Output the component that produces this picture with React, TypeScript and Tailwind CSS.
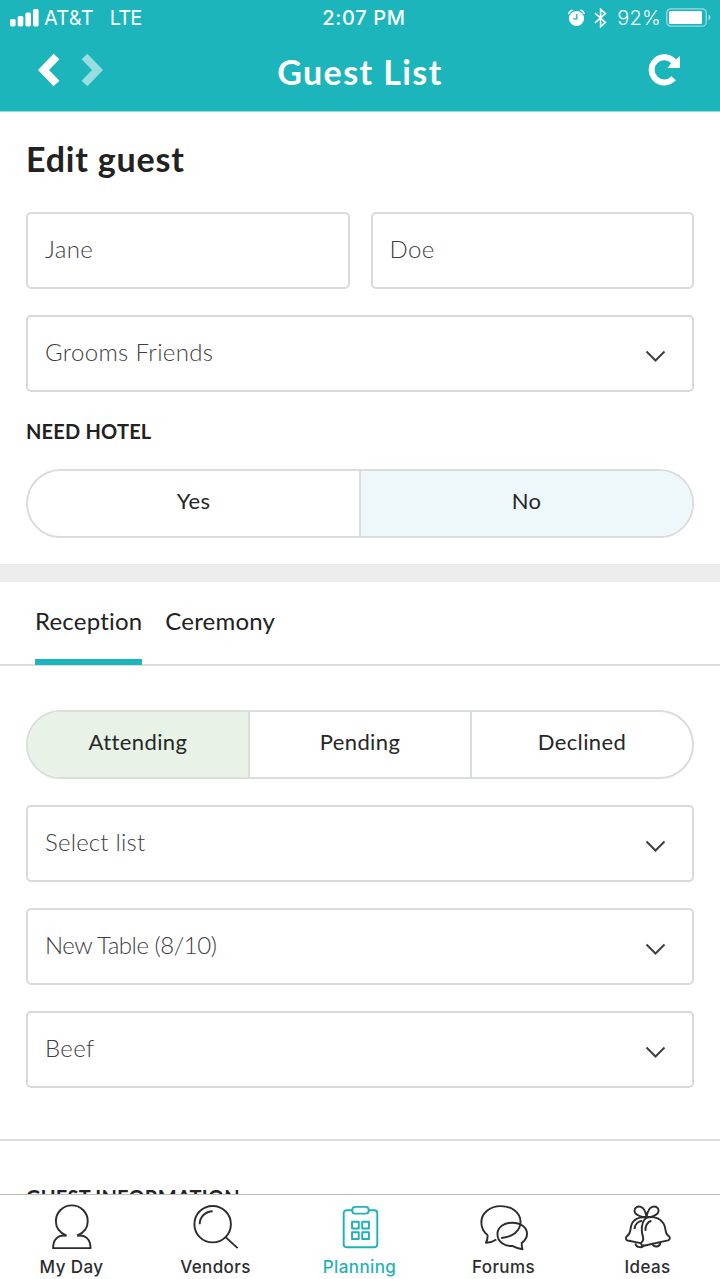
import type { ReactNode } from "react";

type Option = { label: string; className?: string };

const SignalBars = () => (
  <svg width="29" height="18" viewBox="0 0 29 18" fill="white">
    <rect x="0" y="10" width="5.6" height="7.4" rx="1.6" />
    <rect x="7.7" y="7" width="5.6" height="10.4" rx="1.6" />
    <rect x="15.4" y="3.6" width="5.6" height="13.8" rx="1.6" />
    <rect x="23" y="0" width="5.6" height="17.4" rx="1.6" />
  </svg>
);

const AlarmIcon = () => (
  <svg width="17" height="18" viewBox="0 0 17 18" fill="none">
    <circle cx="8.5" cy="9.5" r="7.6" fill="white" />
    <path d="M8.8 5v4.8H5.2" stroke="#1cb5bc" strokeWidth="1.3" />
    <path
      d="M.8 4.4Q1.6 2 4 1.2M16.2 4.4Q15.4 2 13 1.2"
      stroke="white"
      strokeWidth="1.6"
      strokeLinecap="round"
    />
  </svg>
);

const BluetoothIcon = () => (
  <svg width="13" height="20" viewBox="0 0 13 20" fill="none">
    <path
      d="M1 5.2l10.4 9.2L6.6 18.6V1.4l4.8 4.2L1 14.8"
      stroke="white"
      strokeWidth="1.6"
    />
  </svg>
);

const BatteryIcon = () => (
  <svg width="46" height="20" viewBox="0 0 46 20" fill="none">
    <rect
      x=".8"
      y=".8"
      width="39.4"
      height="17.4"
      rx="4"
      stroke="white"
      strokeOpacity=".55"
      strokeWidth="1.3"
    />
    <rect x="3" y="3" width="33" height="13" rx="1.6" fill="white" />
    <path d="M42.5 6.5q2 1 2 3t-2 3z" fill="white" fillOpacity=".55" />
  </svg>
);

const StatusBar = () => {
  return (
    <div className="flex h-9 items-center pr-2 pl-[10px] text-[20px] text-white">
      <div className="flex w-[299px] items-center">
        <SignalBars />
        <span className="ml-[5px] tracking-[0.2px]">AT&amp;T</span>
        <span className="ml-[16px] tracking-[-0.9px]">LTE</span>
      </div>
      <p className="w-[110px] text-center font-medium tracking-[0.7px]">
        2:07 PM
      </p>
      <div className="ml-auto flex items-center">
        <AlarmIcon />
        <span className="ml-[9px]">
          <BluetoothIcon />
        </span>
        <span className="ml-[10px] font-light tracking-[0.2px]">92%</span>
        <span className="ml-[5px]">
          <BatteryIcon />
        </span>
      </div>
    </div>
  );
};

const Header = () => {
  return (
    <header className="h-28 shrink-0 border-b border-[#8fdadd] bg-[#1cb5bc] font-['Inter',sans-serif]">
      <StatusBar />
      <div className="grid h-[68px] grid-cols-3 items-center px-[38px]">
        <div className="flex gap-[21px]">
          <svg width="22" height="34" viewBox="0 0 22 34" fill="none">
            <path d="M18.5 3.5L5.5 17l13 13.5" stroke="white" strokeWidth="8" />
          </svg>
          <svg width="22" height="34" viewBox="0 0 22 34" fill="none">
            <path
              d="M3.5 3.5l13 13.5-13 13.5"
              stroke="white"
              strokeOpacity=".55"
              strokeWidth="8"
            />
          </svg>
        </div>
        <h1 className="pt-[3px] text-center font-['Lato',sans-serif] text-[34px] font-bold tracking-[1.4px] whitespace-nowrap text-white">
          Guest List
        </h1>
        <svg
          className="justify-self-end"
          width="34"
          height="34"
          viewBox="0 0 34 34"
          fill="none"
        >
          <path
            d="M25.6 25.3A12.6 12.6 0 1 1 26.4 9.4"
            stroke="white"
            strokeWidth="6"
          />
          <path d="M32 3v12H19.5l3-4 4-3z" fill="white" />
        </svg>
      </div>
    </header>
  );
};

const Field = ({ children }: { children: ReactNode }) => {
  return (
    <div className="flex h-[77px] flex-1 items-center rounded-[5px] border-2 border-[#d9dada] px-[17px] pb-[3px] text-[24px] font-light tracking-[0.35px] text-[#404040]">
      {children}
    </div>
  );
};

const Select = ({ value, className }: { value: string; className?: string }) => {
  return (
    <div className="flex">
      <Field>
        <span className={className}>{value}</span>
        <svg
          className="mt-[8px] mr-[8px] ml-auto"
          width="22"
          height="14"
          viewBox="0 0 22 14"
          fill="none"
        >
          <path d="M1.5 2.5l9 9 9-9" stroke="#3f4040" strokeWidth="2" />
        </svg>
      </Field>
    </div>
  );
};

const Segmented = ({ options }: { options: Option[] }) => {
  return (
    <div className="flex h-[69px] divide-x-2 divide-[#d9dddc] overflow-hidden rounded-full border-2 border-[#d9dddc] text-[22px] tracking-[0.4px] text-[#262727]">
      {options.map(({ label, className }) => (
        <div
          key={label}
          className={`flex flex-1 basis-0 items-center justify-center pb-[7px] ${className ?? ""}`}
        >
          {label}
        </div>
      ))}
    </div>
  );
};

const PersonIcon = () => (
  <>
    <path d="M19.2 33C12 30 8.2 24.4 8.2 18a16.6 16.6 0 0 1 33.2 0c0 6.4-3.8 12-11 15" />
    <path d="M19.2 33C10.5 31.5 5.3 37 5.3 46h39c0-9-5.2-14.5-13.900-13" />
  </>
);

const SearchIcon = () => (
  <>
    <circle cx="21.500" cy="21" r="19" />
    <path d="M8 21A13.5 13.5 0 0 1 21.5 7.5M35 34.5L47.5 46" />
  </>
);

const ClipboardIcon = () => (
  <>
    <path d="M17 6.5H11a3 3 0 0 0-3 3V42a3 3 0 0 0 3 3h29a3 3 0 0 0 3-3V9.5a3 3 0 0 0-3-3h-6" />
    <rect x="17" y="3" width="17" height="7" rx="3" />
    <path d="M16.7 18.5h7v7h-7zM27.3 18.5h7v7h-7zM16.7 29.5h7v7h-7zM27.3 29.5h7v7h-7z" />
  </>
);

const ChatIcon = () => (
  <>
    <path d="M8 32.5c0 3-.5 5.500-1.800 7.800 4 .1 7.500-1.200 10.800-3.400M8 32.500C4 29.500 1.400 24.500 1.400 19c0-9.800 9-16.800 20.300-16.800S42.200 9 42.200 18.500c0 9.500-8 16-20.200 17" />
    <path d="M43.500 40.500C47 38 49 34.500 49 31c0-7-7-11.500-15.500-11.500S18.200 24 18.200 31.500 25 44 33.500 43.700c3.500 1.800 7 3 10.700 3.500-.6-2.200-.8-4.200-.7-6.700z" />
  </>
);

const BellsIcon = () => (
  <>
    <path d="M23.500 13.500C20 14 11 12 11 7c0-3.500 3.500-5 6.500-4 3.500 1.100 5.300 6 6 10.500.7-4.500 2.500-9.400 6-10.500 3-1 6.500.5 6.500 4 0 5-9 7-12.500 6.500z" />
    <path d="M23.500 14.300c8-2.500 16.500 1.500 18.800 8.700 1.700 5.400.7 8.300 4 10.200 2.300 1.100 1.600 4.100-.4 4.700L20.600 43.500c-2.700.5-3.700-3-1.600-4.500 2.800-2 0-5-.4-10.500-.4-6.500.9-11.700 4.900-14.200z" />
    <path d="M23.500 14.300c-8-1.500-14.500 2-16 8.500-1.500 5 0 8-4.400 10.700-1.700 1.100-1.500 4 .7 4.500l14.700 3M22.500 28c-.8-4 1.500-9.500 6-10.500M11 26c.3-4.500 3.500-8 8-8.500M12 41c.3 5 8 5 9 1.500M29.500 42c2 3.500 8 3 8.300-1.500" />
  </>
);

const TABS = [
  { label: "My Day", icon: <PersonIcon /> },
  { label: "Vendors", icon: <SearchIcon /> },
  { label: "Planning", icon: <ClipboardIcon />, active: true },
  { label: "Forums", icon: <ChatIcon /> },
  { label: "Ideas", icon: <BellsIcon /> },
];

const TabBar = () => {
  return (
    <nav className="flex h-[85px] shrink-0 border-t border-[#bfbfbf] bg-white font-['Inter',sans-serif]">
      {TABS.map(({ label, icon, active }) => (
        <div
          key={label}
          className={`flex flex-1 flex-col items-center pt-[9px] ${
            active ? "text-[#1fb2b8]" : "text-[#2d2d2d]"
          }`}
        >
          <svg
            width="50"
            height="50"
            viewBox="0 0 50 50"
            fill="none"
            stroke="currentColor"
            strokeWidth="2"
            strokeLinejoin="round"
          >
            {icon}
          </svg>
          <span className="mt-[3px] -ml-px text-[17px] leading-6 font-medium tracking-[0.4px]">
            {label}
          </span>
        </div>
      ))}
    </nav>
  );
};

export default function App() {
  return (
    <div className="flex h-[1279px] w-[720px] flex-col overflow-hidden bg-white font-['Lato',sans-serif] text-[#222]">
      <Header />
      <main className="min-h-0 flex-1 overflow-hidden">
        <section className="px-[26px] pt-[27px] pb-[26px]">
          <h2 className="text-[34px] leading-10 font-bold tracking-[0.8px]">
            Edit guest
          </h2>
          <div className="mt-[33px] flex gap-[21px]">
            <Field>Jane</Field>
            <Field>Doe</Field>
          </div>
          <div className="mt-[26px]">
            <Select value="Grooms Friends" />
          </div>
          <h3 className="mt-[25px] text-[20px] leading-7 font-bold tracking-[0.2px]">
            NEED HOTEL
          </h3>
          <div className="mt-6">
            <Segmented
              options={[
                { label: "Yes" },
                { label: "No", className: "bg-[#eef7f9]" },
              ]}
            />
          </div>
        </section>

        <div className="h-[18px] bg-[#ededed]" />

        <div className="flex h-[84px] gap-[23px] border-b-2 border-[#dcdddd] pl-[35px] text-[24px] tracking-[0.2px]">
          <div className="flex h-[83px] border-b-[6px] border-[#1cb5bc] pt-[21px]">
            Reception
          </div>
          <div className="pt-[21px]">Ceremony</div>
        </div>

        <section className="flex flex-col gap-[26px] border-b-2 border-[#dcdddd] px-[26px] pt-11 pb-[51px]">
          <Segmented
            options={[
              { label: "Attending", className: "bg-[#e8f2e6]" },
              { label: "Pending" },
              { label: "Declined" },
            ]}
          />
          <Select value="Select list" className="tracking-[0.2px]" />
          <Select value="New Table (8/10)" className="tracking-[-0.45px]" />
          <Select value="Beef" />
        </section>

        <h3 className="px-[26px] pt-[42px] text-[20px] leading-7 font-bold tracking-[0.2px]">
          GUEST INFORMATION
        </h3>
      </main>
      <TabBar />
    </div>
  );
}
